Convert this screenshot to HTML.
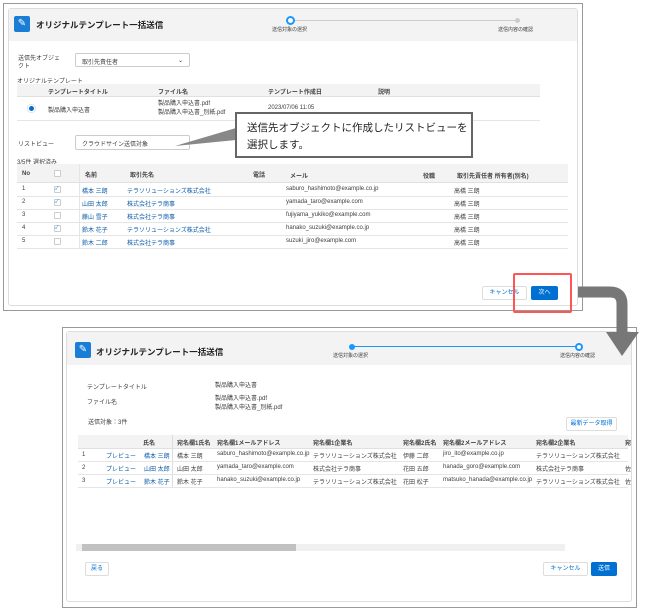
<!DOCTYPE html>
<html><head><meta charset="utf-8"><style>
*{margin:0;padding:0;box-sizing:border-box}
body{width:650px;height:609px;background:#fff;position:relative;overflow:hidden;font-family:"Liberation Sans","Noto Sans CJK JP",sans-serif;color:#3e3e3c;font-size:6px}
.a{position:absolute;white-space:nowrap}
.blue{color:#0b5cab}
.hd{font-weight:bold;color:#444}
.sel{position:absolute;border:1px solid #ccc;border-radius:2px;background:#fff;font-size:6px;padding:3px 6px}
.btn{position:absolute;border:1px solid #ddd;border-radius:2px;background:#fff;color:#0070d2;font-size:6px;text-align:center}
.pb{position:absolute;background:#0070d2;border-radius:2px;color:#fff;font-size:6px;text-align:center}
.cb{position:absolute;width:7px;height:7px;border:1px solid #ccc;border-radius:1px;background:#fff}
.ln{position:absolute;height:1px;background:#e5e5e5}
</style></head><body>

<!-- TOP SCREEN -->
<div class="a" style="left:3px;top:3px;width:580px;height:308px;border:1px solid #999"></div>
<div class="a" style="left:8px;top:8px;width:570px;height:298px;border:1px solid #ddd;border-radius:3px;background:#fff"></div>
<div class="a" style="left:9px;top:9px;width:568px;height:32px;background:#f3f3f3"></div>
<div class="a" style="left:14px;top:16px;width:16px;height:16px;background:#1b7ed6;border-radius:2px;color:#fff;font-size:10px;text-align:center;line-height:16px">✎</div>
<div class="a" style="left:36px;top:19px;font-size:8.5px;font-weight:bold;color:#222">オリジナルテンプレート一括送信</div>
<div class="a" style="left:295px;top:20px;width:222px;height:1px;background:#ccc"></div>
<div class="a" style="left:286px;top:16px;width:9px;height:9px;border:2px solid #1b96ff;border-radius:50%;background:#fff"></div>
<div class="a" style="left:515px;top:18px;width:5px;height:5px;border-radius:50%;background:#ccc"></div>
<div class="a" style="left:272px;top:26px;font-size:5px">送信対象の選択</div>
<div class="a" style="left:498px;top:26px;font-size:5px">送信内容の確認</div>

<div class="a" style="left:18px;top:55px;line-height:8px">送信先オブジェ<br>クト</div>
<div class="sel" style="left:75px;top:53px;width:115px;height:14px">取引先責任者<span style="float:right">⌄</span></div>
<div class="a" style="left:17px;top:76px">オリジナルテンプレート</div>
<div class="a" style="left:17px;top:84px;width:523px;height:13px;background:#f3f3f3;border-bottom:1px solid #e0e0e0"></div>
<div class="a hd" style="left:48px;top:87px">テンプレートタイトル</div>
<div class="a hd" style="left:158px;top:87px">ファイル名</div>
<div class="a hd" style="left:268px;top:87px">テンプレート作成日</div>
<div class="a hd" style="left:378px;top:87px">説明</div>
<div class="a" style="left:29px;top:106px;width:5px;height:5px;border-radius:50%;background:#0070d2;box-shadow:0 0 0 1.5px #fff,0 0 0 2px #ccc"></div>
<div class="a" style="left:48px;top:105px">製品購入申込書</div>
<div class="a" style="left:158px;top:100px;line-height:9px">製品購入申込書.pdf<br>製品購入申込書_別紙.pdf</div>
<div class="a" style="left:268px;top:105px">2023/07/06 11:05</div>
<div class="ln" style="left:17px;top:120px;width:523px"></div>

<div class="a" style="left:18px;top:139px">リストビュー</div>
<div class="sel" style="left:75px;top:135px;width:115px;height:15px">クラウドサイン送信対象</div>
<div class="a" style="left:17px;top:157px">3/5件 選択済み</div>
<div class="a" style="left:17px;top:164px;width:551px;height:19px;background:#f3f3f3;border-bottom:1px solid #e0e0e0"></div>
<div class="a" style="left:79px;top:164px;width:1px;height:84px;background:#e5e5e5"></div>
<div class="a hd" style="left:22px;top:171px">No</div>
<div class="cb" style="left:54px;top:170px"></div>
<div class="a hd" style="left:85px;top:170px">名前</div>
<div class="a hd" style="left:130px;top:170px">取引先名</div>
<div class="a hd" style="left:253px;top:170px">電話</div>
<div class="a hd" style="left:290px;top:171px">メール</div>
<div class="a hd" style="left:423px;top:171px">役職</div>
<div class="a hd" style="left:457px;top:171px">取引先責任者 所有者(別名)</div>

<div class="a" style="left:22px;top:186px">1</div><div class="cb" style="left:54px;top:186px;color:#0070d2;font-size:5px;line-height:5px">✓</div><div class="a blue" style="left:82px;top:186px">橋本 三朗</div><div class="a blue" style="left:127px;top:186px">テラソリューションズ株式会社</div><div class="a" style="left:286px;top:186px">saburo_hashimoto@example.co.jp</div><div class="a" style="left:454px;top:186px">高橋 三朗</div>
<div class="ln" style="left:17px;top:196px;width:551px"></div>
<div class="a" style="left:22px;top:199px">2</div><div class="cb" style="left:54px;top:199px;color:#0070d2;font-size:5px;line-height:5px">✓</div><div class="a blue" style="left:82px;top:199px">山田 太郎</div><div class="a blue" style="left:127px;top:199px">株式会社テラ商事</div><div class="a" style="left:286px;top:199px">yamada_taro@example.com</div><div class="a" style="left:454px;top:199px">高橋 三朗</div>
<div class="ln" style="left:17px;top:209px;width:551px"></div>
<div class="a" style="left:22px;top:212px">3</div><div class="cb" style="left:54px;top:212px"></div><div class="a blue" style="left:82px;top:212px">藤山 雪子</div><div class="a blue" style="left:127px;top:212px">株式会社テラ商事</div><div class="a" style="left:286px;top:212px">fujiyama_yukiko@example.com</div><div class="a" style="left:454px;top:212px">高橋 三朗</div>
<div class="ln" style="left:17px;top:222px;width:551px"></div>
<div class="a" style="left:22px;top:225px">4</div><div class="cb" style="left:54px;top:225px;color:#0070d2;font-size:5px;line-height:5px">✓</div><div class="a blue" style="left:82px;top:225px">鈴木 花子</div><div class="a blue" style="left:127px;top:225px">テラソリューションズ株式会社</div><div class="a" style="left:286px;top:225px">hanako_suzuki@example.co.jp</div><div class="a" style="left:454px;top:225px">高橋 三朗</div>
<div class="ln" style="left:17px;top:235px;width:551px"></div>
<div class="a" style="left:22px;top:238px">5</div><div class="cb" style="left:54px;top:238px"></div><div class="a blue" style="left:82px;top:238px">鈴木 二郎</div><div class="a blue" style="left:127px;top:238px">株式会社テラ商事</div><div class="a" style="left:286px;top:238px">suzuki_jiro@example.com</div><div class="a" style="left:454px;top:238px">高橋 三朗</div>
<div class="ln" style="left:17px;top:248px;width:551px"></div>

<div class="btn" style="left:482px;top:286px;width:45px;height:14px;line-height:12px">キャンセル</div>
<div class="pb" style="left:531px;top:286px;width:27px;height:14px;line-height:14px">次へ</div>
<div class="a" style="left:513px;top:273px;width:59px;height:40px;border:2px solid #f55;border-radius:2px"></div>

<svg class="a" style="left:0;top:0" width="650" height="609">
<polygon points="236,128 175,146 236,140" fill="#888"/>
</svg>
<div class="a" style="left:235px;top:112px;width:238px;height:46px;border:2px solid #666;background:#fff"></div>
<div class="a" style="left:247px;top:120px;font-size:10.5px;line-height:17px;color:#222">送信先オブジェクトに作成したリストビューを<br>選択します。</div>

<!-- BOTTOM SCREEN -->
<div class="a" style="left:62px;top:327px;width:575px;height:281px;border:1px solid #999;background:#fff"></div>
<div class="a" style="left:66px;top:331px;width:566px;height:271px;border:1px solid #ddd;border-radius:3px"></div>
<div class="a" style="left:67px;top:332px;width:564px;height:33px;background:#f3f3f3"></div>
<div class="a" style="left:75px;top:342px;width:16px;height:16px;background:#1b7ed6;border-radius:2px;color:#fff;font-size:10px;text-align:center;line-height:16px">✎</div>
<div class="a" style="left:96px;top:346px;font-size:8.5px;font-weight:bold;color:#222">オリジナルテンプレート一括送信</div>
<div class="a" style="left:352px;top:346px;width:226px;height:1px;background:#1b96ff"></div>
<div class="a" style="left:349px;top:344px;width:6px;height:6px;border-radius:50%;background:#1b96ff"></div>
<div class="a" style="left:575px;top:343px;width:8px;height:8px;border:2px solid #1b96ff;border-radius:50%;background:#fff"></div>
<div class="a" style="left:333px;top:352px;font-size:5px">送信対象の選択</div>
<div class="a" style="left:560px;top:352px;font-size:5px">送信内容の確認</div>

<div class="a" style="left:87px;top:382px">テンプレートタイトル</div>
<div class="a" style="left:215px;top:380px">製品購入申込書</div>
<div class="a" style="left:87px;top:397px">ファイル名</div>
<div class="a" style="left:215px;top:395px;line-height:9px">製品購入申込書.pdf<br>製品購入申込書_別紙.pdf</div>
<div class="a" style="left:88px;top:417px">送信対象：3件</div>
<div class="btn" style="left:566px;top:417px;width:51px;height:14px;line-height:12px">最新データ取得</div>

<div class="a" style="left:78px;top:435px;width:550px;height:14px;background:#f3f3f3;border-bottom:1px solid #e0e0e0"></div>
<div class="a" style="left:172px;top:435px;width:1px;height:52px;background:#ddd"></div>
<div class="a hd" style="left:143px;top:438px">氏名</div>
<div class="a hd" style="left:177px;top:438px">宛名欄1氏名</div>
<div class="a hd" style="left:217px;top:438px">宛名欄1メールアドレス</div>
<div class="a hd" style="left:313px;top:438px">宛名欄1企業名</div>
<div class="a hd" style="left:403px;top:438px">宛名欄2氏名</div>
<div class="a hd" style="left:443px;top:438px">宛名欄2メールアドレス</div>
<div class="a hd" style="left:536px;top:438px">宛名欄2企業名</div>
<div class="a hd" style="left:625px;top:438px">宛</div>

<div class="a" style="left:82px;top:452px">1</div><div class="a blue" style="left:106px;top:451px">プレビュー</div><div class="a blue" style="left:144px;top:451px">橋本 三朗</div><div class="a" style="left:177px;top:451px">橋本 三朗</div><div class="a" style="left:217px;top:451px">saburo_hashimoto@example.co.jp</div><div class="a" style="left:313px;top:451px">テラソリューションズ株式会社</div><div class="a" style="left:403px;top:451px">伊藤 二郎</div><div class="a" style="left:443px;top:451px">jiro_ito@example.co.jp</div><div class="a" style="left:536px;top:451px">テラソリューションズ株式会社</div>
<div class="ln" style="left:78px;top:461px;width:550px"></div>
<div class="a" style="left:82px;top:465px">2</div><div class="a blue" style="left:106px;top:464px">プレビュー</div><div class="a blue" style="left:144px;top:464px">山田 太郎</div><div class="a" style="left:177px;top:464px">山田 太郎</div><div class="a" style="left:217px;top:464px">yamada_taro@example.com</div><div class="a" style="left:313px;top:464px">株式会社テラ商事</div><div class="a" style="left:403px;top:464px">花田 五郎</div><div class="a" style="left:443px;top:464px">hanada_goro@example.com</div><div class="a" style="left:536px;top:464px">株式会社テラ商事</div><div class="a" style="left:625px;top:464px">佐</div>
<div class="ln" style="left:78px;top:474px;width:550px"></div>
<div class="a" style="left:82px;top:478px">3</div><div class="a blue" style="left:106px;top:477px">プレビュー</div><div class="a blue" style="left:144px;top:477px">鈴木 花子</div><div class="a" style="left:177px;top:477px">鈴木 花子</div><div class="a" style="left:217px;top:477px">hanako_suzuki@example.co.jp</div><div class="a" style="left:313px;top:477px">テラソリューションズ株式会社</div><div class="a" style="left:403px;top:477px">花田 松子</div><div class="a" style="left:443px;top:477px">matsuko_hanada@example.co.jp</div><div class="a" style="left:536px;top:477px">テラソリューションズ株式会社</div><div class="a" style="left:625px;top:477px">佐</div>
<div class="ln" style="left:78px;top:487px;width:550px"></div>

<div class="a" style="left:76px;top:544px;width:489px;height:7px;background:#f0f0f0"></div>
<div class="a" style="left:82px;top:544px;width:214px;height:7px;background:#c1c1c1"></div>

<div class="btn" style="left:85px;top:562px;width:24px;height:14px;line-height:12px">戻る</div>
<div class="btn" style="left:543px;top:562px;width:45px;height:14px;line-height:12px">キャンセル</div>
<div class="pb" style="left:591px;top:562px;width:26px;height:14px;line-height:14px">送信</div>

<!-- arrow on top -->
<svg class="a" style="left:0;top:0" width="650" height="609">
<path d="M578 292 H610 Q622 292 622 304 V332" stroke="#777" stroke-width="11" fill="none"/>
<polygon points="606,332 639,332 622,356" fill="#777"/>
</svg>
</body></html>
